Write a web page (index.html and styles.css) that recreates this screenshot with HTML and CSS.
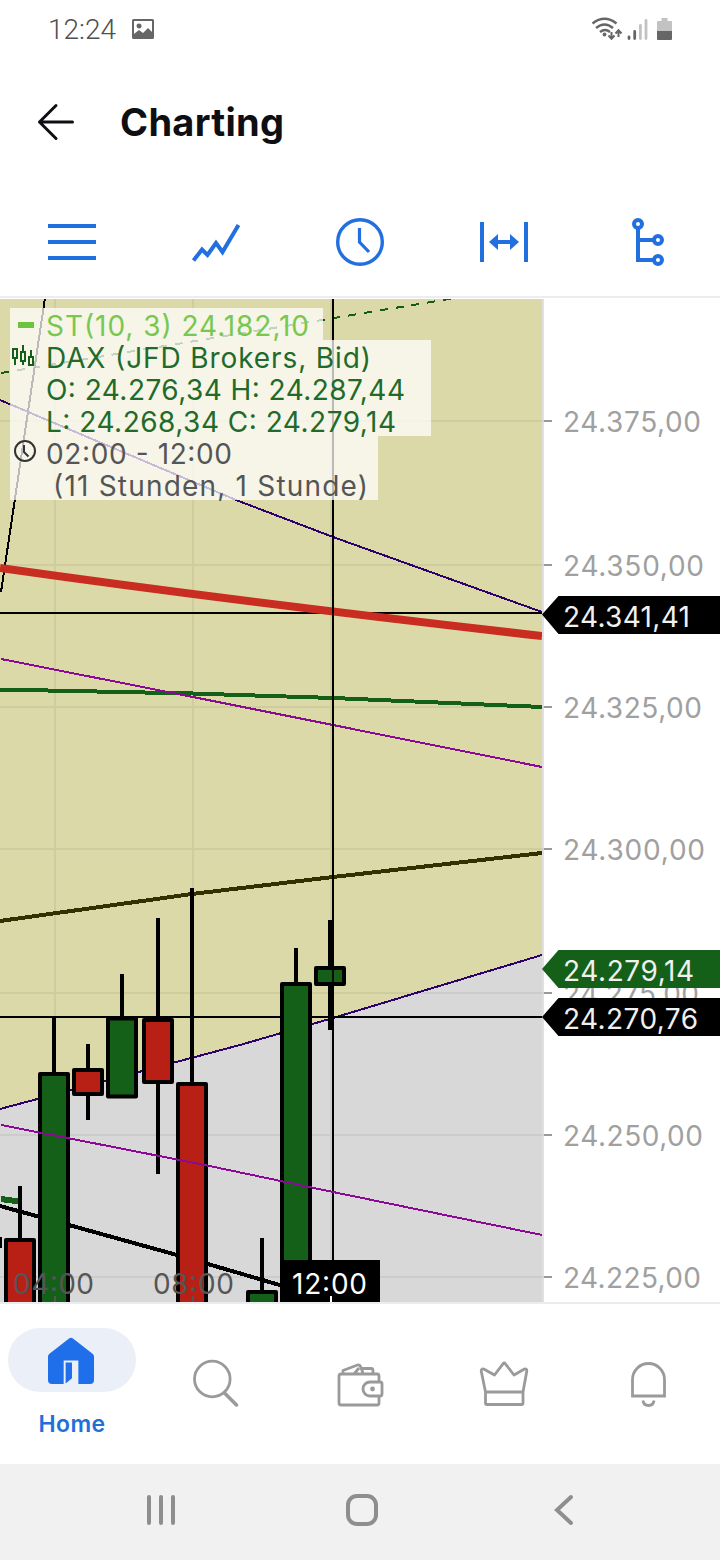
FILE: index.html
```html
<!DOCTYPE html>
<html lang="de">
<head>
<meta charset="utf-8">
<title>Charting</title>
<link rel="stylesheet" href="styles.css">
</head>
<body>
<div class="status">
  <span class="clock">12:24</span>
  <svg class="photo" width="22" height="22" viewBox="0 0 22 22"><path fill="#666" fill-rule="evenodd" d="M1.500 0h19A1.500 1.500 0 0 1 22 1.500v17A1.500 1.500 0 0 1 20.500 20h-19A1.500 1.500 0 0 1 0 18.500v-17A1.500 1.500 0 0 1 1.500 0zM2 2v13l5-4 4 3 5-5 4 4V2zM7 4.500a2.500 2.500 0 1 1 0 5 2.500 2.500 0 0 1 0-5z"/></svg>
  <svg class="signals" width="84" height="26" viewBox="590 16 84 26" fill="none">
    <g stroke="#666" stroke-width="2.400">
      <path d="M592.500 23.500q12-9.500 24 0M596 28q8.500-7 17 0M600 32q5-4 10 0"/>
      <path stroke-width="2" d="M611.500 32v6.500M608.500 35.500l3 3.200 3-3.200M618.500 37v-6.500M615.500 33.500l3-3.200 3 3.200"/>
    </g>
    <circle cx="604.500" cy="34.500" r="1.900" fill="#666"/>
    <g stroke-linecap="round" stroke-width="2.800"><path stroke="#666" d="M629 37v1.500M634.700 31.500v7"/><path stroke="#c2c2c2" d="M640.400 25.500v13M646 20.500v18"/></g>
    <path fill="#c2c2c2" d="M657 22q0-1 1-1h3.500v-3h6v3h3.500q1 0 1 1v9h-15z"/><path fill="#666" d="M657 31h15v8q0 1-1 1h-13q-1 0-1-1z"/>
  </svg>
</div>
<header class="header">
  <svg width="38" height="38" viewBox="0 0 38 38" fill="none" stroke="#0d0f12" stroke-width="3" stroke-linecap="round" stroke-linejoin="round"><path d="M35.500 19H2.500M19 2.500L2.500 19 19 35.500"/></svg>
  <h1>Charting</h1>
</header>
<nav class="tools">
  <svg viewBox="0 0 48 48"><path d="M0 8h48M0 24h48M0 40h48"/></svg>
  <svg viewBox="0 0 48 48"><path d="M1.500 42.500L10 31.500l5.500 5.500L24 25l6.500 9L46.500 7"/></svg>
  <svg viewBox="0 0 48 48"><circle cx="24" cy="24" r="22.300" stroke-width="3.400"/><path stroke-width="3.200" d="M23.500 10v14l9.500 10"/></svg>
  <svg viewBox="0 0 48 48"><path d="M2 4v40M46 4v40M14 24h20"/><path stroke="none" fill="#226fe0" d="M9 24l9-8v16zM39 24l-9-8v16z"/></svg>
  <svg viewBox="0 0 48 48"><path d="M14 11v31h16M14 22h16"/><circle cx="14" cy="6" r="4"/><circle cx="34" cy="22" r="4"/><circle cx="34" cy="42" r="4"/></svg>
</nav>
<main class="chart">
<svg width="720" height="1004" viewBox="0 298 720 1004">
  <defs><clipPath id="plot"><rect x="0" y="299" width="542" height="1003"/></clipPath></defs>
  <rect x="0" y="299" width="544" height="1003" fill="#d8d8d8"/>
  <path fill="#dcd9a9" d="M0 299H542V955L333 1018 240 1045 0 1109z"/>
  <path stroke="#e0e0e0" stroke-width="2" d="M543 299V1302"/>
  <path stroke="#000" stroke-opacity=".055" stroke-width="2" fill="none" d="M55 299V1302M193 299V1302M331 299V1302M0 421H544M0 565H544M0 707H544M0 849H544M0 993H544M0 1135H544M0 1277H544"/>
  <g clip-path="url(#plot)">
    <g fill="none" shape-rendering="crispEdges">
      <path stroke="#175a1b" stroke-width="2" stroke-dasharray="8 8" d="M1 373L322 320 458 297.500"/>
      <path stroke="#000" stroke-width="2" d="M45 298L1 592"/>
      <path stroke="#2d006e" stroke-width="2" d="M0 400L236 500 333 537 542 612"/>
      <path stroke="#2d006e" stroke-width="2" d="M0 1109L240 1045 333 1018 542 955"/>
      <path stroke="#156019" stroke-width="4" d="M0 689.500L193 693.500 333 698 542 707"/>
      <path stroke="#8c0896" stroke-width="2" d="M1 659L193 697 333 725 542 767"/>
      <path stroke="#353000" stroke-width="4" d="M0 921L192 894 333 877 542 853"/>
      <path stroke="#000" stroke-width="4" d="M0 1206L40 1217 177 1255 290 1288"/>
      <path stroke="#156019" stroke-width="6" d="M1 1199L19 1201.500"/>
    </g>
    <path stroke="#000" stroke-width="2" d="M0 613H542M0 1017H542M333 299V1302"/>
    <path stroke="#c92c20" stroke-width="8" fill="none" d="M0 568Q240 602 542 636"/>
    <g stroke="#000" stroke-width="4" stroke-linejoin="round">
      <path d="M20 1186V1240M54 1018V1074M88 1044V1120M122 974V1018M158 918V1174M192 888V1084M262 1238V1292M296 948V984M330 920V1030M0 1237V1248"/>
      <g fill="#b82015"><path d="M6 1240h28v70H6zM74 1070h28v24H74zM144 1020h28v62h-28zM178 1084h28v226h-28z"/></g>
      <g fill="#156019"><path d="M40 1074h28v240H40zM108 1018.500h28v78h-28zM248 1292h28v20h-28zM282 984h28v326h-28zM316 968h28v16h-28z"/></g>
    </g>
    <path stroke="#000" stroke-width="2" d="M333 299V1302"/>
    <path stroke="#8c0896" stroke-width="2" fill="none" shape-rendering="crispEdges" d="M1 1125L200 1164 333 1192 542 1235"/>
  </g>
  <path fill="#fff" fill-opacity=".73" d="M10 308H323V340H431V436H378V500H10z"/>
  <rect x="18" y="322" width="16" height="6" fill="#6cc43c"/>
  <path fill="none" stroke="#156019" stroke-width="2" d="M13 349h4v9h-4zM15 358v7M21 352h4v9h-4zM23 345v7M23 361v4M29 357h4v8h-4zM31 350v7"/>
  <g fill="none" stroke="#333" stroke-width="2"><circle cx="25" cy="451" r="10"/><path d="M24 445v7l4.500 4.500"/></g>
  <g class="legend">
    <text class="lime" x="46" y="335.500" textLength="263">ST(10, 3) 24.182,10</text>
    <text class="green" x="46" y="367.500" textLength="325">DAX (JFD Brokers, Bid)</text>
    <text class="green" x="46" y="399.500" textLength="359">O: 24.276,34 H: 24.287,44</text>
    <text class="green" x="46" y="431.500" textLength="350">L: 24.268,34 C: 24.279,14</text>
    <text class="grey" x="46" y="463.500" textLength="186">02:00 - 12:00</text>
    <text class="grey" x="53" y="495.500" textLength="315">(11 Stunden, 1 Stunde)</text>
  </g>
  <path stroke="#999" stroke-width="2" d="M544 421h8M544 565h8M544 707h8M544 849h8M544 993h8M544 1135h8M544 1277h8"/>
  <g class="axis">
    <text x="563" y="432" textLength="138">24.375,00</text>
    <text x="563" y="576" textLength="141">24.350,00</text>
    <text x="563" y="718" textLength="139">24.325,00</text>
    <text x="563" y="860" textLength="142">24.300,00</text>
    <text x="563" y="1004" textLength="136">24.275,00</text>
    <text x="563" y="1146" textLength="140">24.250,00</text>
    <text x="563" y="1288" textLength="138">24.225,00</text>
  </g>
  <path d="M542 614.500L558.500 596H720V634H558.500zM542 1017L558.500 998H720V1036H558.500z"/>
  <path fill="#156019" d="M542 969L558.500 950H720V988H558.500z"/>
  <g class="price">
    <text x="563" y="627" textLength="127">24.341,41</text>
    <text x="563" y="981" textLength="131">24.279,14</text>
    <text x="563" y="1029" textLength="135">24.270,76</text>
  </g>
  <path fill="#000" d="M280 1260H380V1302H280z"/>
  <path stroke="#555" stroke-width="2" d="M55 1296v6M193 1296v6"/>
  <path stroke="#fff" stroke-width="2" d="M331 1296v6"/>
  <g class="time">
    <text x="13" y="1294" textLength="81">04:00</text>
    <text x="153" y="1294" textLength="81">08:00</text>
    <text class="active" x="292" y="1294" textLength="75">12:00</text>
  </g>
</svg>
</main>
<nav class="tabs">
  <a class="tab current">
    <span class="pill"><svg width="47" height="47" viewBox="0 0 48 48"><path fill="#1f6feb" fill-rule="evenodd" d="M21.500 1.500q2-1.500 4 0L45.500 17q1.500 1 1.500 3v24q0 4-4 4H31V24H16v24H4q-4 0-4-4V20q0-2 1.500-3zM18 26h6.500v16L18 47.500z"/></svg></span>
    <span class="name">Home</span>
  </a>
  <a class="tab"><svg width="48" height="48" viewBox="0 0 48 48"><circle cx="20.300" cy="18" r="17.800"/><path stroke-linecap="round" stroke-width="3.500" d="M32.500 32l12 12"/></svg></a>
  <a class="tab"><svg width="48" height="48" viewBox="0 0 48 48"><path stroke-linejoin="round" d="M43 19.500V15q0-2-2-2H5q-2 0-2 2v27q0 2 2 2h36q2 0 2-2v-7M7 13V9.500L21.500 4q2-.5 3 1.500L27 12M18 13l5-6M26 7.500h9q2 0 2 2V13M46 22v11q0 2-2 2H34a7 7 0 0 1 0-14h10q2 0 2 2"/><circle cx="36.500" cy="28" r="2.400" fill="#9a9a9a" stroke="none"/></svg></a>
  <a class="tab"><svg width="48" height="48" viewBox="0 0 48 48"><path stroke-linejoin="round" d="M5.500 31L1.200 10q0-2.500 2.500-2L14.500 14 23 2.800q1.200-1.600 2.400 0L34 14 44.500 8q2.500-.5 2.300 2L43 31zM5.500 31v11q0 1.500 1.500 1.500h34.500q1.500 0 1.500-1.500V31"/></svg></a>
  <a class="tab"><svg width="48" height="48" viewBox="0 0 48 48"><path d="M8.500 35V18.500a16 16 0 0 1 32 0V35zM19 39.500q.5 5 5.500 5t5.500-5"/></svg></a>
</nav>
<footer class="system">
  <svg width="28" height="32" viewBox="0 0 28 32"><path stroke-linecap="round" d="M2 3v26M14 3v26M26 3v26"/></svg>
  <svg class="home-key" width="32" height="32" viewBox="0 0 32 32"><rect x="2" y="2" width="28" height="28" rx="9"/></svg>
  <svg width="20" height="32" viewBox="0 0 20 32"><path stroke-linecap="round" d="M17 3L3 16l14 13"/></svg>
</footer>
</body>
</html>
```
FILE: styles.css
```css
body {
  margin: 0;
  width: 720px;
  height: 1560px;
  overflow: hidden;
  display: flex;
  flex-direction: column;
  background: #fff;
  font-family: Inter, "Liberation Sans", sans-serif;
}
svg { display: block; flex: none; overflow: visible; }
.status {
  height: 58px;
  padding: 0 46px 0 48px;
  display: flex;
  align-items: center;
}
.clock {
  width: 84px;
  font: 300 28px Roboto, sans-serif;
  color: #505050;
}
.photo { margin-top: 2px; }
.signals { margin-left: auto; }
.header {
  height: 126px;
  box-sizing: border-box;
  padding: 2px 0 0 37px;
  display: flex;
  align-items: center;
  gap: 45px;
}
.header h1 {
  margin: 0;
  font-size: 38px;
  font-weight: 700;
  letter-spacing: .3px;
  color: #0d0f12;
}
.tools {
  height: 112px;
  display: grid;
  grid-template-columns: repeat(5, 144px);
  justify-items: center;
  align-items: center;
  border-bottom: 2px solid #ebedf2;
}
.tools svg {
  width: 48px;
  height: 48px;
  margin-top: 4px;
  fill: none;
  stroke: #226fe0;
  stroke-width: 4;
}
.chart {
  height: 1004px;
  border-bottom: 2px solid #ebebf2;
}
.chart text {
  font-size: 28px;
  font-weight: 400;
}
.lime { fill: #78c850; }
.green { fill: #216a2a; }
.grey { fill: #555; }
.axis { fill: #a0a0a0; }
.price { fill: #f0f0f0; }
.time { fill: #555; }
.active { fill: #fff; }
.tabs {
  height: 160px;
  display: grid;
  grid-template-columns: repeat(5, 144px);
}
.tab {
  display: flex;
  flex-direction: column;
  align-items: center;
  padding-top: 57px;
}
.tab > svg {
  fill: none;
  stroke: #9a9a9a;
  stroke-width: 2.8;
}
.current { padding-top: 24px; }
.pill {
  width: 128px;
  height: 64px;
  box-sizing: border-box;
  padding: 1px 1px 0 0;
  border-radius: 32px;
  background: #ebeff7;
  display: flex;
  align-items: center;
  justify-content: center;
}
.name {
  margin-top: 18px;
  font-size: 23px;
  line-height: 28px;
  font-weight: 600;
  letter-spacing: .4px;
  color: #226fd8;
}
.system {
  height: 96px;
  box-sizing: border-box;
  padding: 0 146px 4px 147px;
  display: flex;
  align-items: center;
  justify-content: space-between;
  background: #f1f1f1;
}
.system svg {
  fill: none;
  stroke: #8e8e8e;
  stroke-width: 4;
}
.system .home-key { margin-right: 6px; }
```
